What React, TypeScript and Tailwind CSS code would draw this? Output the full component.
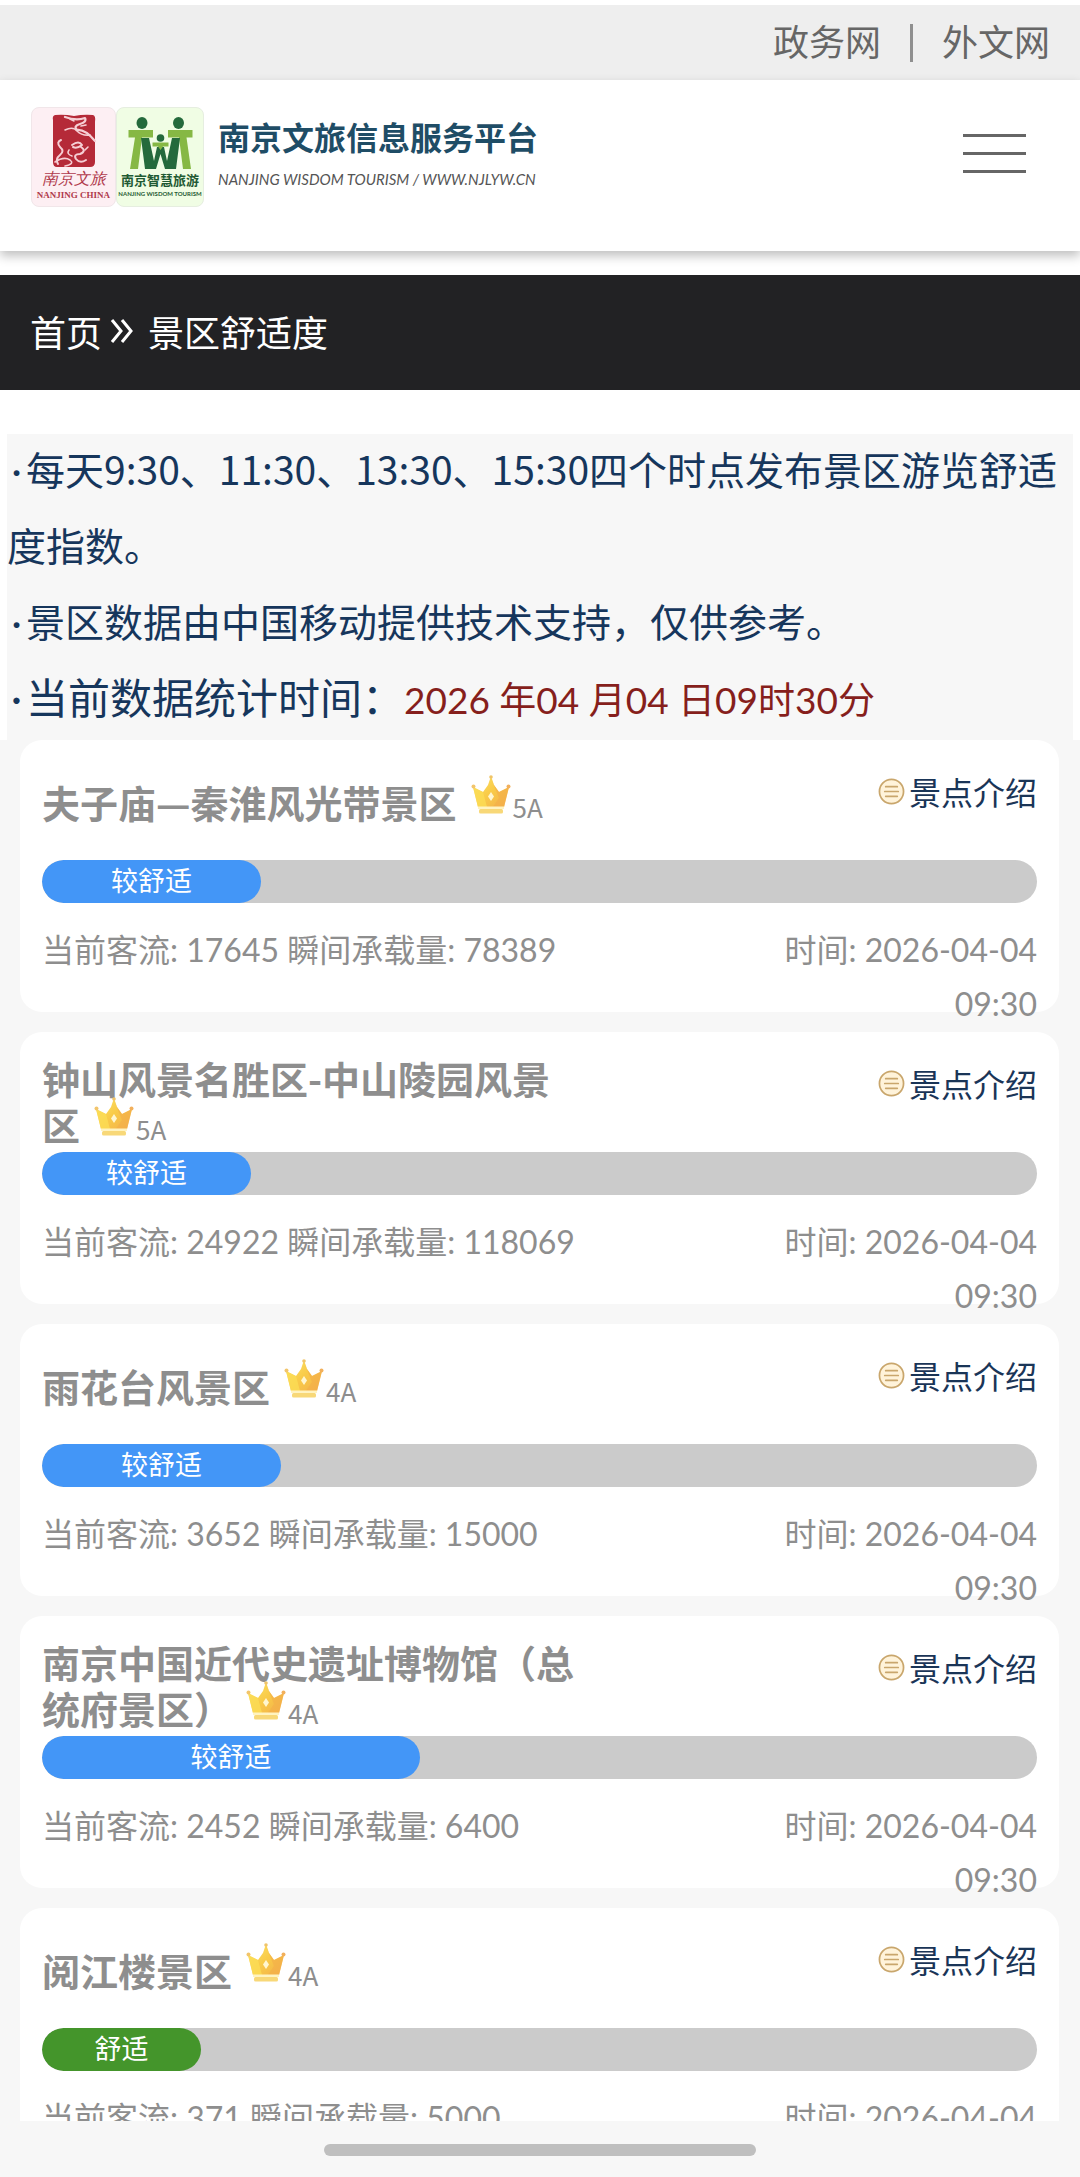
import { ReactNode } from "react";

type Spot = {
  name: string;
  grade: string;
  level: string;
  percent: number;
  tone: string;
  visitors: number;
  capacity: number;
};

const SPOTS: Spot[] = [
  { name: "夫子庙—秦淮风光带景区", grade: "5A", level: "较舒适", percent: 22, tone: "bg-[#4396f7]", visitors: 17645, capacity: 78389 },
  { name: "钟山风景名胜区-中山陵园风景区", grade: "5A", level: "较舒适", percent: 21, tone: "bg-[#4396f7]", visitors: 24922, capacity: 118069 },
  { name: "雨花台风景区", grade: "4A", level: "较舒适", percent: 24, tone: "bg-[#4396f7]", visitors: 3652, capacity: 15000 },
  { name: "南京中国近代史遗址博物馆（总统府景区）", grade: "4A", level: "较舒适", percent: 38, tone: "bg-[#4396f7]", visitors: 2452, capacity: 6400 },
  { name: "阅江楼景区", grade: "4A", level: "舒适", percent: 16, tone: "bg-[#44952b]", visitors: 371, capacity: 5000 },
];

function Crown() {
  return (
    <svg viewBox="0 0 40 40" className="-mt-2 mb-1 ml-3.5 inline-block size-10 align-baseline" aria-hidden="true">
      <defs>
        <linearGradient id="crownBody" x1="0" y1="0" x2="1" y2="1">
          <stop offset="0" stopColor="#fbe36a" />
          <stop offset="0.5" stopColor="#f9cb48" />
          <stop offset="1" stopColor="#f2ae4c" />
        </linearGradient>
      </defs>
      <path d="M2 13 L12 18 L17 11 L20 2 L23 11 L28 18 L38 13 L33 33 H7 Z" fill="url(#crownBody)" />
      <path d="M20 4 L23 11 L28 18 L38 13 L33 33 L22 33 L28 24 Z" fill="#f3ad4a" opacity="0.6" />
      <path d="M2 13 L12 18 L16 33 H7 Z" fill="#fbdc55" opacity="0.8" />
      <circle cx="20" cy="3" r="1.800" fill="#f0c468" />
      <circle cx="2.500" cy="12.500" r="2" fill="#f2c56c" />
      <circle cx="37.500" cy="12.500" r="2" fill="#f2b05c" />
      <path d="M20 18 L23 22.500 L20 27 L17 22.500 Z" fill="#fff6cf" />
      <rect x="7" y="32.500" width="26" height="2.500" fill="#fff3c0" />
      <rect x="8" y="35" width="24" height="4.500" rx="1.500" fill="#f8d878" />
    </svg>
  );
}

function ListIcon() {
  return (
    <svg viewBox="0 0 28 28" className="size-[27px]" fill="none" stroke="#c9a66c" strokeWidth="1.800" strokeLinecap="round" aria-hidden="true">
      <circle cx="14" cy="14" r="12.500" fill="#fff3da" />
      <path d="M8 9 H20 M7 14 H21 M8 19 H20" />
    </svg>
  );
}

function RedLogo() {
  return (
    <span className="flex h-[100px] w-[85px] flex-col items-center rounded-lg border border-[#f1e6e9] bg-[#fdeff3] pt-1.5 text-[#b03a4c]">
      <svg viewBox="0 0 44 54" className="h-[54px] w-11" aria-hidden="true">
        <path d="M3 1 Q12 0 22 2 Q32 0 41 1 Q44 2 43 8 V48 Q43 53 38 53 H5 Q1 53 1 48 V6 Q0 2 3 1 Z" fill="#b52a38" />
        <g fill="none" stroke="#f6cfd5" strokeLinecap="round" strokeLinejoin="round">
          <path d="M13 3 Q24 7 33 4 Q35 8 28 10 Q21 12 25 16 Q33 15 43 27" strokeWidth="2.200" />
          <path d="M13 16 Q21 12 25 17 Q30 22 38 21 M22 7 L18 5 M29 12 L34 11" strokeWidth="1.600" />
          <path d="M9 26 Q4 28 8 33 Q13 37 8 41 Q3 45 6 50" strokeWidth="2" />
          <path d="M20 31 Q27 26 30 31 Q25 35 21 33 M29 33 Q35 37 28 40 Q21 40 24 45 Q28 50 34 46" strokeWidth="2" />
          <path d="M3 48 Q12 42 18 46 Q23 50 13 52 M17 36 Q14 40 20 42 M33 36 L36 33" strokeWidth="1.600" />
        </g>
      </svg>
      <span className="font-serif text-[16px] leading-[22px] italic">南京文旅</span>
      <span className="font-['Liberation_Serif',serif] text-[9px] leading-[10px] font-bold">NANJING CHINA</span>
    </span>
  );
}

function GreenLogo() {
  return (
    <span className="flex h-[100px] w-[88px] flex-col items-center rounded-lg border border-[#e6eee0] bg-[#f0fde4] pt-2 text-[#1f5a33]">
      <svg viewBox="0 0 67 54" className="h-[54px] w-[67px]" aria-hidden="true">
        <g fill="#86b844">
          <path d="M1.500 14 H26 V21.500 H15 L11 53 H3 L8 21.500 H1.500 Z" />
          <path d="M65.500 14 H41 V21.500 H52 L56 53 H64 L59.500 21.500 H65.500 Z" />
        </g>
        <g fill="#246a3c">
          <ellipse cx="15" cy="7" rx="5.500" ry="6" />
          <ellipse cx="51.500" cy="7" rx="5.500" ry="6" />
          <circle cx="33.500" cy="22" r="3.800" />
          <path d="M14 22 H22 L27 45 L30 31 H37 L40 45 L45 22 H53 L49 53 H38 L33.500 38 L29 53 H18 Z" />
        </g>
        <path d="M25.500 26.500 H41.500 V30.500 H36 L33.500 34 L31 30.500 H25.500 Z" fill="#86b844" />
      </svg>
      <span className="text-[13px] leading-5 font-bold">南京智慧旅游</span>
      <span className="font-['Lato',sans-serif] text-[6px] leading-[8px] font-bold whitespace-nowrap">NANJING WISDOM TOURISM</span>
    </span>
  );
}

function TopLink({ children }: { children: ReactNode }) {
  return (
    <a href="#" className="pb-1.5 text-[36px] leading-10">
      {children}
    </a>
  );
}

function Bullet() {
  return <span className="inline-block w-[19px] text-center font-['Lato',sans-serif] leading-none">·</span>;
}

function SpotCard({ spot }: { spot: Spot }) {
  return (
    <li className="h-[272px] rounded-[22px] bg-white px-[22px]">
      <div className="flex h-[120px] justify-between pt-[23px]">
        <div className="flex min-h-[78px] w-[54%] items-center self-start">
          <h2 className="text-[38px] leading-[46px] font-bold">
            {spot.name}
            <Crown />
            <span className="ml-0.5 text-[26px] leading-none font-normal">{spot.grade}</span>
          </h2>
        </div>
        <a href="#" className="flex items-center gap-1 self-start pt-1 text-[32px] leading-[48px] text-[#1a3557]">
          <ListIcon />
          景点介绍
        </a>
      </div>
      <div className="h-[43px] overflow-hidden rounded-full bg-[#cbcbcb]">
        <div
          className={`h-full rounded-full text-center text-[27px] leading-[40px] text-white ${spot.tone}`}
          style={{ width: `${spot.percent}%` }}
        >
          {spot.level}
        </div>
      </div>
      <div className="mt-5 flex justify-between font-['Lato','Noto_Sans_CJK_SC',sans-serif] text-[32px] leading-[54px]">
        <p>
          当前客流: {spot.visitors} 瞬间承载量: {spot.capacity}
        </p>
        <p className="w-[30%] text-right">时间: 2026-04-04 09:30</p>
      </div>
    </li>
  );
}

export default function App() {
  return (
    <div className="flex h-screen flex-col bg-[#f7f7f7] font-['Noto_Sans_CJK_SC',sans-serif] text-[#8e8e8e]">
      <div className="min-h-0 flex-1 overflow-y-auto bg-white [scrollbar-width:none]">
        <nav className="mt-[5px] flex h-[75px] items-center justify-end gap-[29px] bg-[#eeeeee] pr-[30px] text-[#666666]">
          <TopLink>政务网</TopLink>
          <span className="h-[38px] w-[3px] bg-[#8f8f8f]" />
          <TopLink>外文网</TopLink>
        </nav>

        <header className="flex h-[171px] items-start justify-between bg-white pt-[27px] pr-[54px] pl-[31px] shadow-[0_5px_10px_rgba(0,0,0,0.25)]">
          <a href="#" className="flex items-start">
            <RedLogo />
            <GreenLogo />
            <span className="ml-[14px] flex flex-col pt-1.5">
              <span className="text-[32px] leading-[46px] font-bold text-[#1f4d66]">南京文旅信息服务平台</span>
              <span className="font-['Lato',sans-serif] text-[15px] leading-10 text-[#555555] italic">
                NANJING WISDOM TOURISM / WWW.NJLYW.CN
              </span>
            </span>
          </a>
          <button type="button" aria-label="菜单" className="mt-[27px] flex w-[63px] flex-col gap-[15px]">
            <span className="h-[3px] bg-[#666666]" />
            <span className="h-[3px] bg-[#666666]" />
            <span className="h-[3px] bg-[#666666]" />
          </button>
        </header>

        <nav className="mt-6 flex h-[115px] items-center bg-[#222224] pb-1 pl-[30px] text-[36px] text-white">
          <a href="#">首页</a>
          <svg viewBox="0 0 24 26" className="mr-3.5 ml-2 h-[26px] w-6" fill="none" stroke="currentColor" strokeWidth="3" aria-hidden="true">
            <path d="M2 2 L11 13 L2 24 M12 2 L21 13 L12 24" />
          </svg>
          <a href="#">景区舒适度</a>
        </nav>

        <section className="mx-[7px] mt-11 flow-root bg-[#f7f7f7] pb-1.5 text-[39px] leading-[76px] text-[#16365c]">
          <p className="-mt-1">
            <Bullet />
            每天9:30、11:30、13:30、15:30四个时点发布景区游览舒适度指数。
          </p>
          <p>
            <Bullet />
            景区数据由中国移动提供技术支持，仅供参考。
          </p>
          <p className="text-[42px]">
            <Bullet />
            当前数据统计时间：
            <span className="font-['Lato','Noto_Sans_CJK_SC',sans-serif] text-[37px] leading-none text-[#861f1c]">
              2026 年04 月04 日09时30分
            </span>
          </p>
        </section>

        <ul className="flex flex-col gap-5 bg-[#f7f7f7] pr-[21px] pb-5 pl-5">
          {SPOTS.map((spot) => (
            <SpotCard key={spot.name} spot={spot} />
          ))}
        </ul>
      </div>
      <footer className="flex h-14 shrink-0 items-start justify-center pt-[23px]">
        <span className="h-3 w-2/5 rounded-full bg-[#bfbfbf]" />
      </footer>
    </div>
  );
}
